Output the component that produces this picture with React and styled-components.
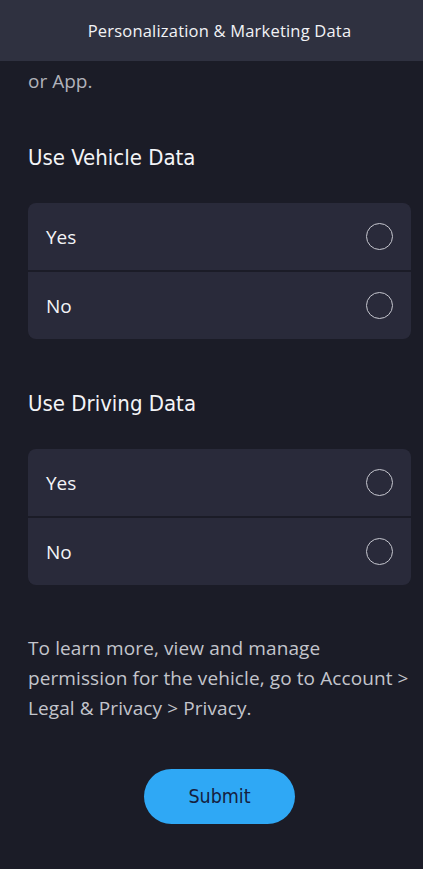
import React, { useState } from 'react';
import styled, { createGlobalStyle } from 'styled-components';

const GlobalStyle = createGlobalStyle`
    html, body {
        margin: 0;
        padding: 0;
        background-color: #1b1c27;
    }
    body {
        font-family: "Open Sans", "Noto Sans", sans-serif;
    }
`;

const Page = styled.div`
    display: flex;
    flex-direction: column;
    min-height: 869px;
    background-color: #1b1c27;
`;

const Header = styled.div`
    display: flex;
    align-items: center;
    justify-content: center;
    height: 61px;
    background-color: #2f3140;
    color: #f2f3f6;
    font-size: 16.5px;
    letter-spacing: 0.2px;
    padding-left: 16px;
`;

const Content = styled.div`
    display: flex;
    flex-direction: column;
    padding: 0 12px 0 28px;
`;

const Intro = styled.p`
    margin: 8px 0 0;
    color: #b0b2ba;
    font-size: 19px;
    line-height: 24px;
`;

const SectionTitle = styled.h2`
    margin: ${(props) => props.top}px 0 0;
    color: #f3f4f7;
    font-family: "DejaVu Sans Condensed", "Liberation Sans Narrow", Roboto, sans-serif;
    font-weight: normal;
    font-size: 22px;
    line-height: 30px;
`;

const Card = styled.div`
    display: flex;
    flex-direction: column;
    gap: 2px;
    margin-top: 30px;
    border-radius: 8px;
    overflow: hidden;
    background-color: #1b1c27;
`;

const Option = styled.label`
    display: flex;
    align-items: center;
    justify-content: space-between;
    height: 67px;
    padding: 0 18px 0 18px;
    background-color: #292a3a;
    color: #f3f4f7;
    font-size: 19px;
    cursor: pointer;
`;

const Radio = styled.span`
    width: 25px;
    height: 25px;
    border-radius: 50%;
    border: 1.5px solid #c6c7cf;
    box-sizing: content-box;
    display: flex;
    align-items: center;
    justify-content: center;

    &::after {
        content: '';
        width: 13px;
        height: 13px;
        border-radius: 50%;
        background-color: ${(props) => (props.checked ? '#2fa8f5' : 'transparent')};
    }
`;

const Note = styled.p`
    margin: 48px 0 0;
    color: #c3c5cc;
    font-size: 19px;
    letter-spacing: 0.1px;
    line-height: 30px;
`;

const Footer = styled.div`
    display: flex;
    justify-content: center;
    padding: 46px 0 46px;
`;

const SubmitButton = styled.button`
    width: 151px;
    height: 55px;
    border: none;
    border-radius: 28px;
    background-color: #2fa8f5;
    color: #15203e;
    font-family: "DejaVu Sans Condensed", "Liberation Sans Narrow", Roboto, sans-serif;
    font-size: 19.5px;
    cursor: pointer;
`;

const choices = ['Yes', 'No'];

const Question = ({ title, top, value, onChange }) => (
    <>
        <SectionTitle top={top}>{title}</SectionTitle>
        <Card>
            {choices.map((choice) => (
                <Option key={choice} onClick={() => onChange(choice)}>
                    {choice}
                    <Radio checked={value === choice} />
                </Option>
            ))}
        </Card>
    </>
);

const App = () => {
    const [vehicle, setVehicle] = useState(null);
    const [driving, setDriving] = useState(null);

    return (
        <Page>
            <GlobalStyle />
            <Header>Personalization &amp; Marketing Data</Header>
            <Content>
                <Intro>or App.</Intro>
                <Question title="Use Vehicle Data" top={50} value={vehicle} onChange={setVehicle} />
                <Question title="Use Driving Data" top={50} value={driving} onChange={setDriving} />
                <Note>
                    To learn more, view and manage permission for the vehicle, go to Account &gt;
                    Legal &amp; Privacy &gt; Privacy.
                </Note>
                <Footer>
                    <SubmitButton>Submit</SubmitButton>
                </Footer>
            </Content>
        </Page>
    );
};

export default App;
